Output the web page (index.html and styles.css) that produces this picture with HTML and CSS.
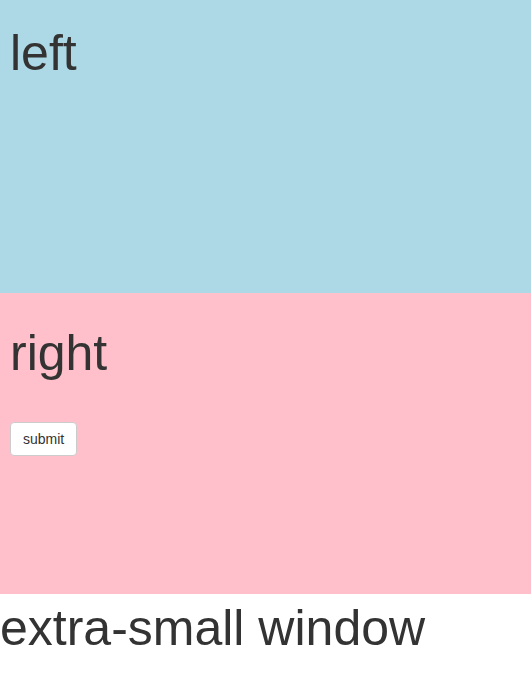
FILE: index.html
```html
<!DOCTYPE html>
<html>
<head>
<meta charset="utf-8">
<link rel="stylesheet" href="styles.css">
</head>
<body>
<div class="left">
  <h1 class="title title-left">left</h1>
</div>
<div class="right">
  <h1 class="title title-right">right</h1>
  <button class="btn" type="button">submit</button>
</div>
<h1 class="title title-footer">extra-small window</h1>
</body>
</html>
```
FILE: styles.css
```css
html, body {
  margin: 0;
  padding: 0;
}
body {
  font-family: "Liberation Sans", Arial, Helvetica, sans-serif;
  color: #333;
  background: #fff;
}
.title {
  font-size: 50px;
  font-weight: 500;
  line-height: 55px;
  margin: 0;
}
.left {
  background: #add8e6;
  height: 293px;
  box-sizing: border-box;
  padding: 26px 10px 0;
}
.right {
  background: #ffc0cb;
  height: 301px;
  box-sizing: border-box;
  padding: 33px 10px 0;
}
.btn {
  display: inline-block;
  margin-top: 41px;
  font-family: "Liberation Sans", Arial, Helvetica, sans-serif;
  font-size: 14px;
  line-height: 20px;
  padding: 6px 12px;
  color: #333;
  background: #fff;
  border: 1px solid #ccc;
  border-radius: 4px;
}
.title-footer {
  margin-top: 7px;
}
```
